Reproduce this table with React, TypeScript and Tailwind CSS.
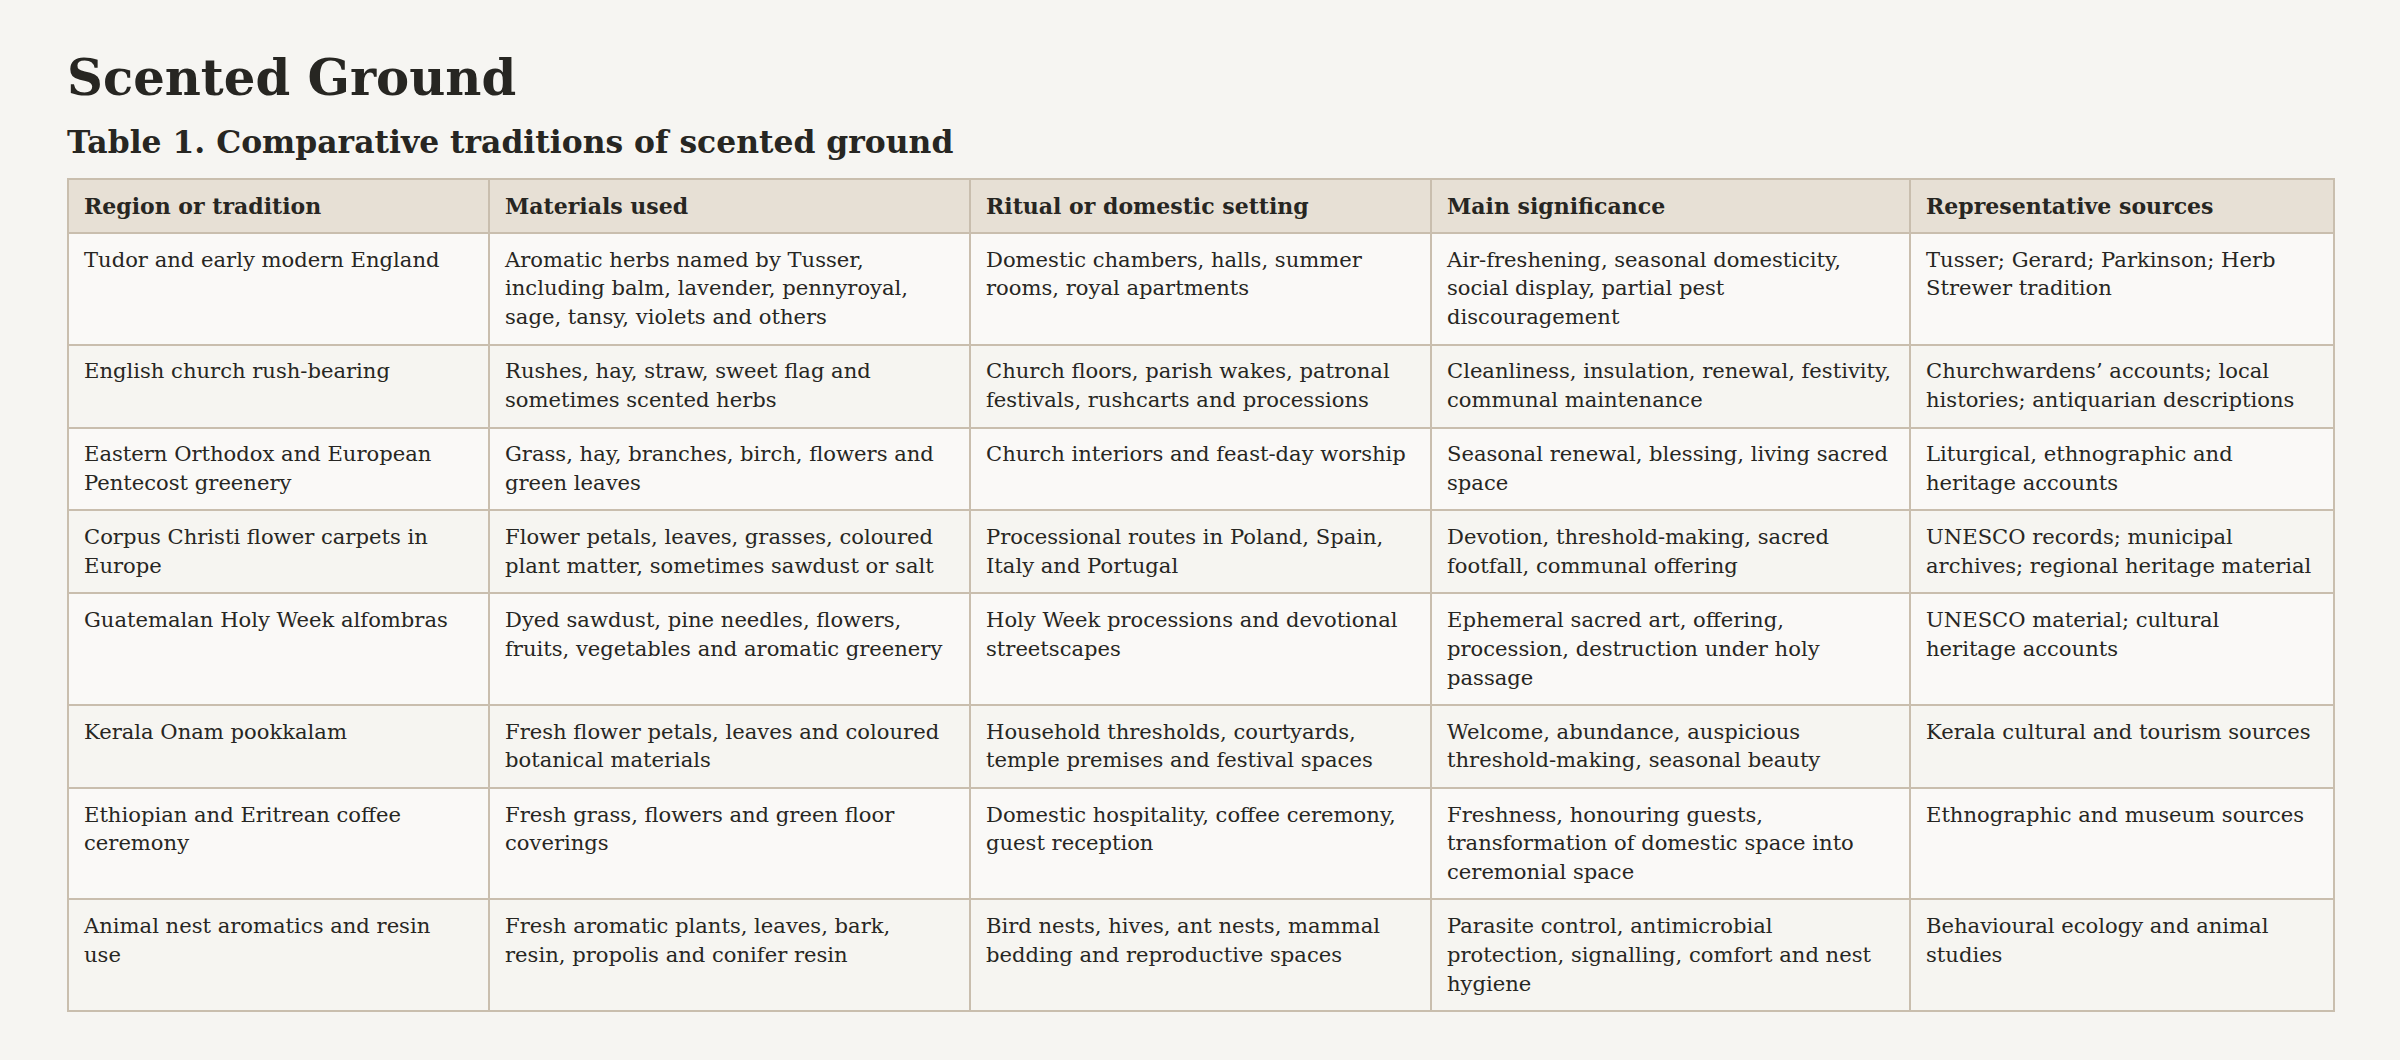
import React from 'react'

type Row = {
  region: string
  materials: string
  setting: string
  significance: string
  sources: string
}

const rows: Row[] = [
  {
    region: 'Tudor and early modern England',
    materials: 'Aromatic herbs named by Tusser, including balm, lavender, pennyroyal, sage, tansy, violets and others',
    setting: 'Domestic chambers, halls, summer rooms, royal apartments',
    significance: 'Air-freshening, seasonal domesticity, social display, partial pest discouragement',
    sources: 'Tusser; Gerard; Parkinson; Herb Strewer tradition',
  },
  {
    region: 'English church rush-bearing',
    materials: 'Rushes, hay, straw, sweet flag and sometimes scented herbs',
    setting: 'Church floors, parish wakes, patronal festivals, rushcarts and processions',
    significance: 'Cleanliness, insulation, renewal, festivity, communal maintenance',
    sources: 'Churchwardens’ accounts; local histories; antiquarian descriptions',
  },
  {
    region: 'Eastern Orthodox and European Pentecost greenery',
    materials: 'Grass, hay, branches, birch, flowers and green leaves',
    setting: 'Church interiors and feast-day worship',
    significance: 'Seasonal renewal, blessing, living sacred space',
    sources: 'Liturgical, ethnographic and heritage accounts',
  },
  {
    region: 'Corpus Christi flower carpets in Europe',
    materials: 'Flower petals, leaves, grasses, coloured plant matter, sometimes sawdust or salt',
    setting: 'Processional routes in Poland, Spain, Italy and Portugal',
    significance: 'Devotion, threshold-making, sacred footfall, communal offering',
    sources: 'UNESCO records; municipal archives; regional heritage material',
  },
  {
    region: 'Guatemalan Holy Week alfombras',
    materials: 'Dyed sawdust, pine needles, flowers, fruits, vegetables and aromatic greenery',
    setting: 'Holy Week processions and devotional streetscapes',
    significance: 'Ephemeral sacred art, offering, procession, destruction under holy passage',
    sources: 'UNESCO material; cultural heritage accounts',
  },
  {
    region: 'Kerala Onam pookkalam',
    materials: 'Fresh flower petals, leaves and coloured botanical materials',
    setting: 'Household thresholds, courtyards, temple premises and festival spaces',
    significance: 'Welcome, abundance, auspicious threshold-making, seasonal beauty',
    sources: 'Kerala cultural and tourism sources',
  },
  {
    region: 'Ethiopian and Eritrean coffee ceremony',
    materials: 'Fresh grass, flowers and green floor coverings',
    setting: 'Domestic hospitality, coffee ceremony, guest reception',
    significance: 'Freshness, honouring guests, transformation of domestic space into ceremonial space',
    sources: 'Ethnographic and museum sources',
  },
  {
    region: 'Animal nest aromatics and resin use',
    materials: 'Fresh aromatic plants, leaves, bark, resin, propolis and conifer resin',
    setting: 'Bird nests, hives, ant nests, mammal bedding and reproductive spaces',
    significance: 'Parasite control, antimicrobial protection, signalling, comfort and nest hygiene',
    sources: 'Behavioural ecology and animal studies',
  },
]

const headers = [
  'Region or tradition',
  'Materials used',
  'Ritual or domestic setting',
  'Main significance',
  'Representative sources',
]

const cell =
  'border-2 border-[#c9beae] pl-[15px] pr-[17px] py-[11.75px] align-top text-left last:pr-[19px]'

const App = () => {
  return (
    <div className="min-h-screen bg-[#f6f5f2] px-[67px] pt-[48px] pb-12 font-['DejaVu_Serif',serif] text-[#272622]">
      <h1 className="text-[49.7px] font-bold leading-[1.2]">Scented Ground</h1>
      <h2 className="mt-[14px] text-[31.4px] font-bold leading-[1.28]">
        Table 1. Comparative traditions of scented ground
      </h2>
      <table className="mt-4 w-full table-fixed border-collapse text-[21.1px] leading-[28.7px]">
        <colgroup>
          <col className="w-[421px]" />
          <col className="w-[481px]" />
          <col className="w-[461px]" />
          <col className="w-[479px]" />
          <col className="w-[424px]" />
        </colgroup>
        <thead>
          <tr className="bg-[#e7e0d5]">
            {headers.map((h) => (
              <th key={h} className={`${cell} text-[22px] font-bold`}>
                {h}
              </th>
            ))}
          </tr>
        </thead>
        <tbody>
          {rows.map((r, i) => (
            <tr key={r.region} className={i % 2 === 0 ? 'bg-[#faf9f7]' : 'bg-[#f6f5f1]'}>
              <td className={cell}>{r.region}</td>
              <td className={cell}>{r.materials}</td>
              <td className={cell}>{r.setting}</td>
              <td className={cell}>{r.significance}</td>
              <td className={cell}>{r.sources}</td>
            </tr>
          ))}
        </tbody>
      </table>
    </div>
  )
}

export default App
